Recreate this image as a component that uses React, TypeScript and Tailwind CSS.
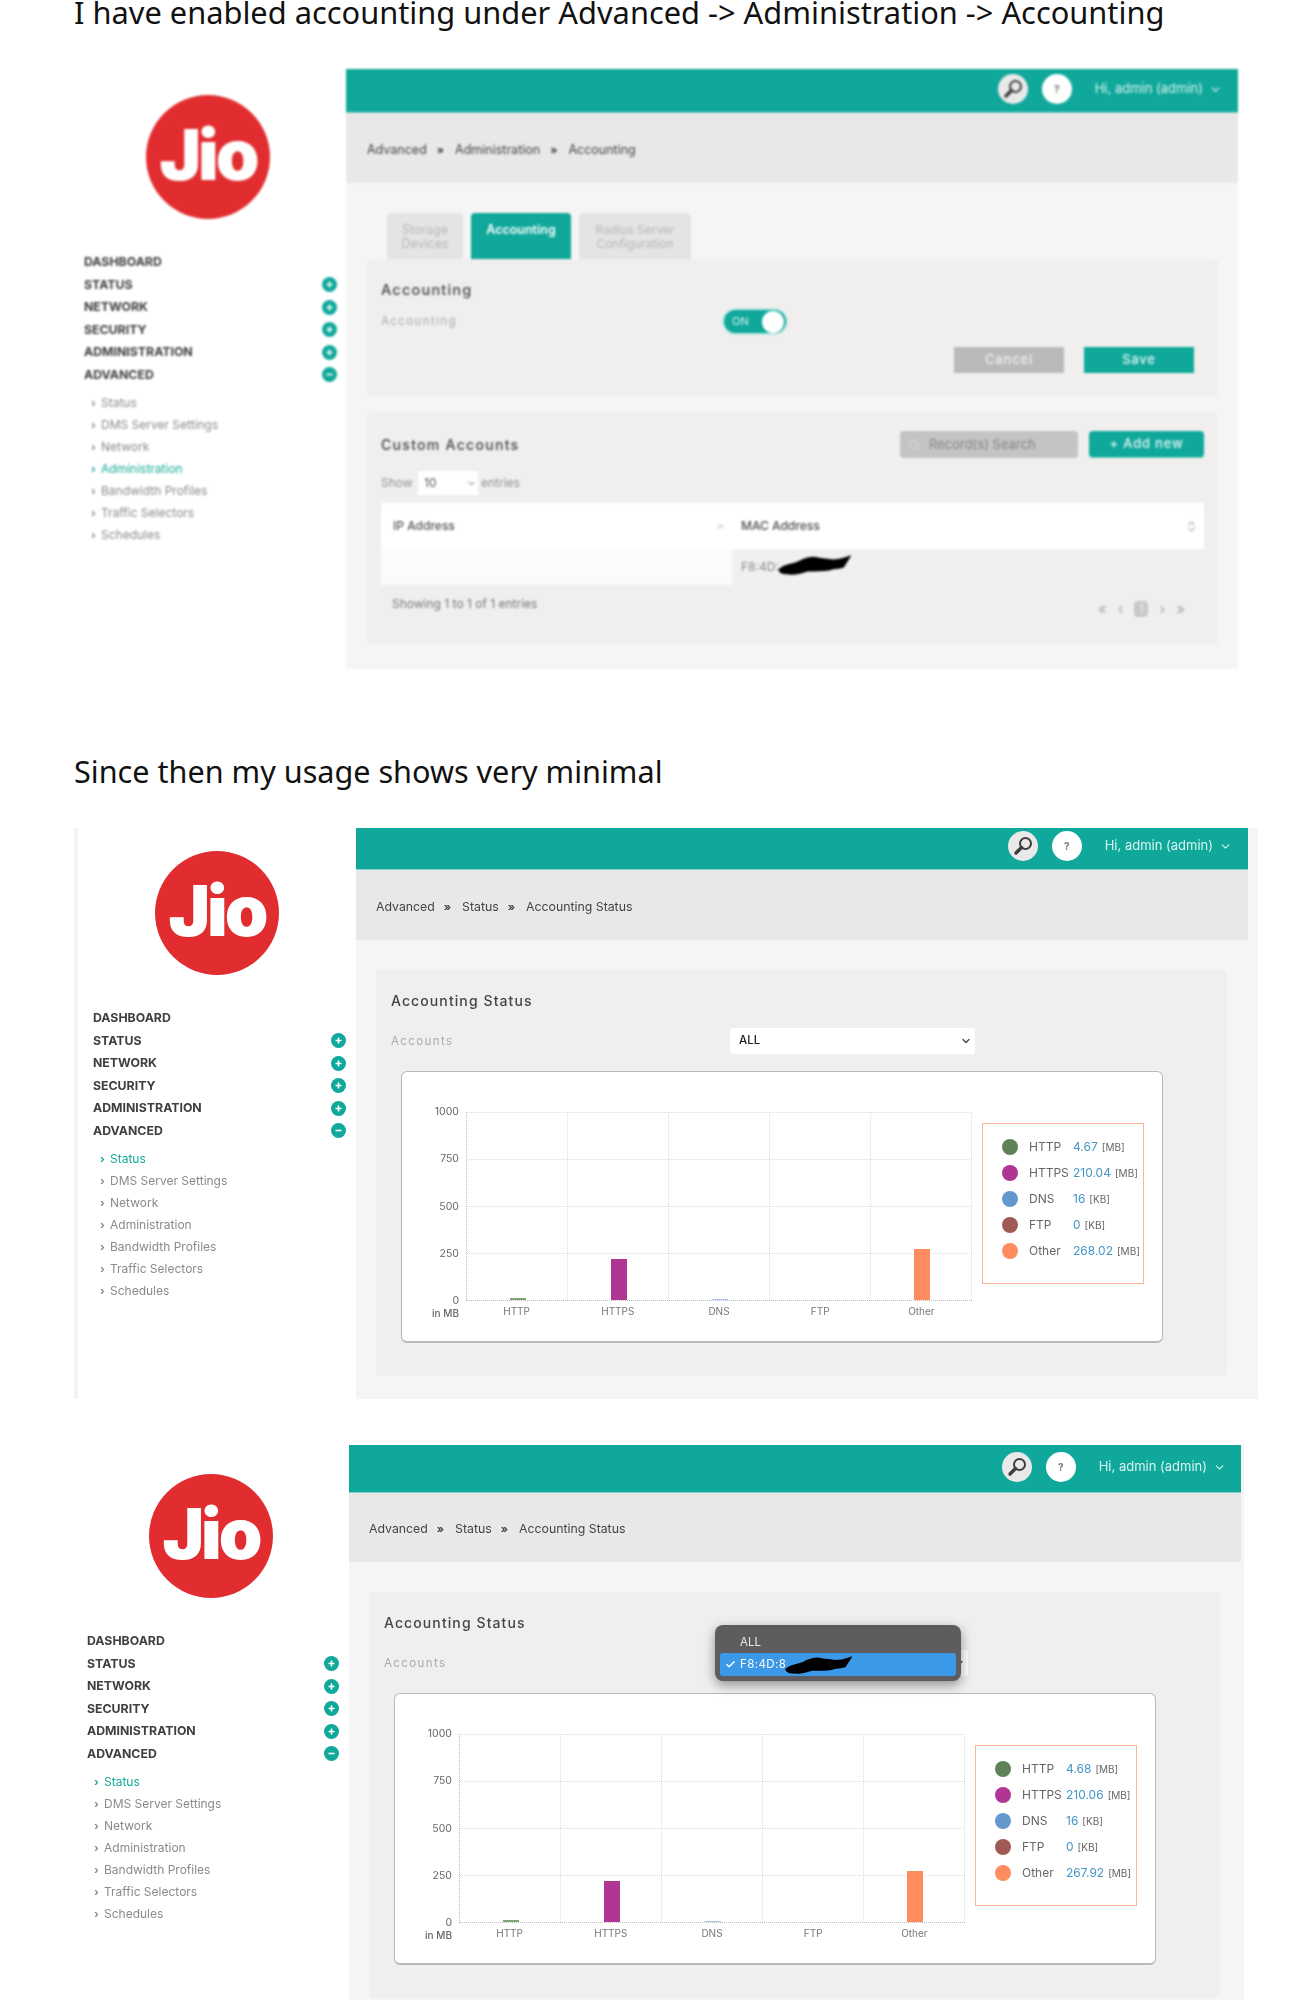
import { ChevronDown, ChevronUp, ChevronsUpDown, Search, Check } from "lucide-react";

const navItems = ["DASHBOARD", "STATUS", "NETWORK", "SECURITY", "ADMINISTRATION", "ADVANCED"];
const subItems = ["Status", "DMS Server Settings", "Network", "Administration", "Bandwidth Profiles", "Traffic Selectors", "Schedules"];

const bars = [
  { label: "HTTP", barClass: "h-[2px] bg-[#7fa277]" },
  { label: "HTTPS", barClass: "h-[41px] bg-[#b03693]" },
  { label: "DNS", barClass: "h-[1px] bg-[#a9c4ea]" },
  { label: "FTP", barClass: "h-0" },
  { label: "Other", barClass: "h-[51px] bg-[#ff8c5e]" },
];

const dotColors = ["bg-[#5f8258]", "bg-[#b03693]", "bg-[#6597cf]", "bg-[#a05a55]", "bg-[#ff8c5e]"];

type LegendRow = { name: string; value: string; unit: string };

function RoundIcon({ minus }: { minus?: boolean }) {
  return (
    <svg width="15" height="15" viewBox="0 0 15 15">
      <circle cx="7.5" cy="7.5" r="7.5" fill="#10a89b" />
      <path d={minus ? "M4.5 7.5h6" : "M4.5 7.5h6M7.5 4.5v6"} stroke="#fff" strokeWidth="1.6" />
    </svg>
  );
}

// coretan hitam yang menutupi MAC address
function Scribble({ className }: { className: string }) {
  return (
    <svg className={className} viewBox="0 0 74 20" preserveAspectRatio="none">
      <path
        d="M3 15c6-6 14-4 20-8 6-3 12-5 18-3 5 1 10 1 14 2 5 0 11-1 16-3l-5 8c-5 2-9 1-14 3-8 1-15 1-22 1-6 2-12 4-17 3-5 0-9 0-10-3z"
        fill="#000"
        stroke="#000"
        strokeWidth="3"
      />
    </svg>
  );
}

function Logo() {
  return (
    <div className="ml-[62px] flex h-[124px] w-[124px] items-center justify-center rounded-full bg-[#e22d30] pb-[5px]">
      <span className="font-[Inter,sans-serif] text-[70px] leading-none font-black tracking-[-3px] text-white">Jio</span>
    </div>
  );
}

function Sidebar({ className, activeSub }: { className: string; activeSub: number }) {
  return (
    <aside className={className}>
      <Logo />
      <div className="mt-8">
        {navItems.map((item, i) => (
          <div key={item} className="flex h-[22.5px] items-center justify-between text-[12.3px] font-bold text-[#3f3f3f]">
            <span>{item}</span>
            {i > 0 && <RoundIcon minus={item === "ADVANCED"} />}
          </div>
        ))}
      </div>
      <div className="mt-[6px] pl-[7px]">
        {subItems.map((item, i) => (
          <div key={item} className={`flex h-[22px] items-center text-[12px] ${i === activeSub ? "text-[#18a99b]" : "text-[#8a8a8a]"}`}>
            <span className="w-[10px] text-[11px] font-bold">›</span>
            {item}
          </div>
        ))}
      </div>
    </aside>
  );
}

function SearchGlyph() {
  return (
    <svg width="22" height="22" viewBox="0 0 22 22" fill="none">
      <circle cx="13.5" cy="8.5" r="5.5" stroke="#3d3d3d" strokeWidth="2" />
      <path d="M9.5 12.5L4 18" stroke="#3d3d3d" strokeWidth="3.4" strokeLinecap="round" />
    </svg>
  );
}

function Header({ className }: { className: string }) {
  return (
    <div className={className}>
      <div className="flex h-[30px] w-[30px] items-center justify-center rounded-full bg-[#e9e9e9]">
        <SearchGlyph />
      </div>
      <div className="ml-[14px] flex h-[30px] w-[30px] items-center justify-center rounded-full bg-white text-[10px] font-bold text-[#777]">?</div>
      <span className="ml-[23px] text-[13px] text-[#d9f3f0]">Hi, admin (admin)</span>
      <ChevronDown size={13} className="ml-[6px] text-[#d9f3f0]" />
    </div>
  );
}

function Breadcrumb({ items, className }: { items: string[]; className: string }) {
  return (
    <div className={className}>
      {items.map((item, i) => (
        <span key={item} className="flex items-center gap-[11px]">
          {i > 0 && <span className="text-[11px] font-bold">»</span>}
          {item}
        </span>
      ))}
    </div>
  );
}

function Chart({ legend }: { legend: LegendRow[] }) {
  return (
    <div className="ml-[10px] mt-[17px] flex h-[272px] w-[762px] rounded-md border border-b-2 border-[#b9b9b9] bg-white pt-[40px]">
      <div className="grid grid-cols-[64px_506px] grid-rows-[189px_auto]">
        <div className="flex flex-col justify-between pr-[7px] text-[10.5px] text-[#666]">
          {["1000", "750", "500", "250", "0"].map((tick) => (
            <div key={tick} className="flex h-0 items-center justify-end">{tick}</div>
          ))}
        </div>
        <div className="grid border-b border-l border-dotted border-[#bbb]">
          <div className="col-start-1 row-start-1 grid grid-cols-5 grid-rows-4">
            {Array.from({ length: 20 }).map((_, i) => (
              <div key={i} className="border-t border-r border-dotted border-[#dcdcdc]" />
            ))}
          </div>
          <div className="col-start-1 row-start-1 grid grid-cols-5 items-end justify-items-center">
            {bars.map((bar) => (
              <div key={bar.label} className={`w-[16px] ${bar.barClass}`} />
            ))}
          </div>
        </div>
        <div className="mt-[5px] pr-[7px] text-right text-[10px] font-medium text-[#666]">in MB</div>
        <div className="mt-[3px] grid grid-cols-5 justify-items-center text-[10px] text-[#777]">
          {bars.map((bar) => (
            <span key={bar.label}>{bar.label}</span>
          ))}
        </div>
      </div>
      <div className="ml-[10px] mt-[11px] h-[161px] w-[162px] border-[1.5px] border-[#ffb49a] pt-[10px] pl-[19px]">
        {legend.map((row, i) => (
          <div key={row.name} className="flex h-[26px] items-center text-[12px] text-[#666]">
            <span className={`h-[16px] w-[16px] rounded-full ${dotColors[i]}`} />
            <span className="ml-[11px] w-[44px]">{row.name}</span>
            <span className="text-[#4497c4]">{row.value}</span>
            <span className="ml-[4px] text-[10px]">{row.unit}</span>
          </div>
        ))}
      </div>
    </div>
  );
}

function AccountingStatus({ legend, open }: { legend: LegendRow[]; open?: boolean }) {
  return (
    <div className="ml-[20px] mt-[30px] h-[406px] w-[851px] rounded-sm bg-[#f0efee] pt-[21px] pl-[15px]">
      <div className="h-[20px] text-[14px] leading-[20px] font-medium tracking-[1.1px] text-[#444]">Accounting Status</div>
      <div className="mt-[17px] flex h-[26px] items-center">
        <span className="w-[339px] pt-[1px] text-[11.5px] tracking-[1.4px] text-[#aaa]">Accounts</span>
        <div className="relative flex h-[26px] w-[245px] items-center justify-between rounded-[3px] bg-white pr-[3px] pl-[9px] text-[11.5px] font-medium text-[#222]">
          <span>{open ? "" : "ALL"}</span>
          <ChevronDown size={12} strokeWidth={2.5} className="text-[#444]" />
          {open && (
            <div className="absolute top-[-25px] left-[-8px] h-[56px] w-[246px] rounded-lg bg-[#5f5c60] px-[5px] pt-[8px] text-[11.5px] font-normal text-white shadow-[0_4px_12px_rgba(0,0,0,0.4)]">
              <div className="h-[20px] pl-[20px] leading-[18px] text-[#e8e8e8]">ALL</div>
              <div className="relative flex h-[23px] items-center rounded-[3px] bg-[#3b99e8]">
                <Check size={11} strokeWidth={3} className="ml-[5px]" />
                <span className="ml-[4px] tracking-[0.4px]">F8:4D:8</span>
                <Scribble className="absolute top-[3px] left-[64px] h-[18px] w-[68px]" />
              </div>
            </div>
          )}
        </div>
      </div>
      <Chart legend={legend} />
    </div>
  );
}

function ShotOne() {
  return (
    <section className="ml-[74px] mt-[41px] flex blur-[0.8px]">
      <Sidebar className="w-[272px] pt-[26px] pr-[9px] pl-[10px]" activeSub={3} />
      <div className="h-[600px] w-[892px] bg-[#f5f5f5]">
        <Header className="flex h-[44px] items-center justify-end border-b border-[#7fd3ca] bg-[#10a89b] pr-[16px] pb-[3px]" />
        <Breadcrumb items={["Advanced", "Administration", "Accounting"]} className="flex h-[70px] items-center gap-[10px] bg-[#e8e8e8] pt-[4px] pl-[21px] text-[12.5px] text-[#444]" />
        <div className="ml-[41px] mt-[30px] flex h-[46px] gap-[8px] text-center text-[12.5px] leading-[14px]">
          <div className="w-[76px] rounded-t bg-[#e3e4e6] pt-[10px] text-[#b8b8b8]">Storage<br />Devices</div>
          <div className="w-[100px] rounded-t bg-[#10a89b] pt-[10px] font-semibold text-white">Accounting</div>
          <div className="w-[112px] rounded-t bg-[#e3e4e6] pt-[10px] text-[12px] text-[#b8b8b8]">Radius Server<br />Configuration</div>
        </div>
        <div className="ml-[21px] h-[137px] w-[851px] rounded-sm bg-[#f0efee] pt-[21px] pr-[24px] pl-[14px]">
          <div className="h-[20px] text-[14.5px] leading-[20px] font-medium tracking-[1.2px] text-[#444]">Accounting</div>
          <div className="mt-[8px] flex h-[27px] items-center">
            <span className="w-[341px] text-[11.5px] tracking-[1.4px] text-[#aaa]">Accounting</span>
            <div className="flex h-[27px] w-[66px] items-center justify-between rounded-full border-2 border-[#bfe9e4] bg-[#10a89b] pr-[2px] pl-[8px] text-[11px] text-[#d9f3f0]">
              ON
              <span className="h-[22px] w-[22px] rounded-full bg-white" />
            </div>
          </div>
          <div className="mt-[12px] flex justify-end gap-[20px] text-[13px] font-medium tracking-[0.8px]">
            <div className="flex h-[26px] w-[110px] items-center justify-center bg-[#b9babb] text-[#eee]">Cancel</div>
            <div className="flex h-[26px] w-[110px] items-center justify-center bg-[#10a89b] text-[#e6f6f4]">Save</div>
          </div>
        </div>
        <div className="ml-[21px] mt-[17px] h-[231px] w-[851px] rounded-sm bg-[#f0efee] px-[14px] pt-[18px]">
          <div className="flex h-[27px] items-center">
            <span className="flex-1 text-[14px] font-medium tracking-[1.3px] text-[#444]">Custom Accounts</span>
            <div className="flex h-[27px] w-[178px] items-center rounded-sm bg-[#c4c4c4] pl-[8px] text-[13px] text-[#858585]">
              <Search size={12} className="mr-[9px] text-[#ddd]" />
              Record(s) Search
            </div>
            <div className="ml-[11px] flex h-[27px] w-[115px] items-center justify-center rounded-sm border-b border-[#6fcfc4] bg-[#10a89b] text-[13px] font-medium tracking-[0.8px] text-[#e6f6f4]">+ Add new</div>
          </div>
          <div className="mt-[13px] flex h-[24px] items-center text-[12px] text-[#909090]">
            <span className="w-[37px]">Show</span>
            <div className="flex h-[24px] w-[60px] items-center justify-between bg-white pr-[1px] pl-[6px] text-[#555]">
              10
              <ChevronDown size={11} />
            </div>
            <span className="ml-[3px]">entries</span>
          </div>
          <div className="mt-[8px] grid w-[823px] grid-cols-[351px_472px] text-[12px] text-[#555]">
            <div className="flex h-[46px] items-center justify-between bg-white pr-[6px] pl-[12px] font-medium">
              IP Address
              <ChevronUp size={11} className="text-[#888]" />
            </div>
            <div className="flex h-[46px] items-center justify-between bg-white pr-[6px] pl-[9px] font-medium">
              MAC Address
              <ChevronsUpDown size={13} className="text-[#aaa]" />
            </div>
            <div className="h-[36px] bg-[#fbfbfb]" />
            <div className="relative flex h-[36px] items-center bg-[#f1f0ef] pl-[9px] text-[#888]">
              F8:4D:
              <Scribble className="absolute top-[6px] left-[45px] h-[20px] w-[74px]" />
            </div>
          </div>
          <div className="flex items-start justify-between pr-[19px] pl-[11px] text-[12px] text-[#777]">
            <span className="mt-[11px] leading-[16px]">Showing 1 to 1 of 1 entries</span>
            <div className="mt-[16px] flex items-center gap-[11px] text-[15px] leading-[16px] text-[#aaa]">
              <span>«</span>
              <span>‹</span>
              <span className="w-[14px] rounded-sm bg-[#c9c9c9] text-center text-[12px] text-[#eee]">1</span>
              <span>›</span>
              <span>»</span>
            </div>
          </div>
        </div>
      </div>
    </section>
  );
}

const legendTwo: LegendRow[] = [
  { name: "HTTP", value: "4.67", unit: "[MB]" },
  { name: "HTTPS", value: "210.04", unit: "[MB]" },
  { name: "DNS", value: "16", unit: "[KB]" },
  { name: "FTP", value: "0", unit: "[KB]" },
  { name: "Other", value: "268.02", unit: "[MB]" },
];

const legendThree: LegendRow[] = [
  { name: "HTTP", value: "4.68", unit: "[MB]" },
  { name: "HTTPS", value: "210.06", unit: "[MB]" },
  { name: "DNS", value: "16", unit: "[KB]" },
  { name: "FTP", value: "0", unit: "[KB]" },
  { name: "Other", value: "267.92", unit: "[MB]" },
];

export default function App() {
  return (
    <main className="h-[2014px] w-[1294px] overflow-hidden bg-white font-[Inter,sans-serif]">
      <h1 className="ml-[74px] -mt-[4px] h-[32px] font-['Noto_Sans',sans-serif] text-[30.8px] leading-[32px] font-normal text-[#111]">
        I have enabled accounting under Advanced -&gt; Administration -&gt; Accounting
      </h1>
      <ShotOne />
      <h2 className="ml-[74px] mt-[86px] h-[32px] font-['Noto_Sans',sans-serif] text-[30.6px] leading-[32px] font-normal text-[#111]">
        Since then my usage shows very minimal
      </h2>

      <section className="ml-[74px] mt-[41px] flex border-l-4 border-[#f3f3f3] blur-[0.5px]">
        <Sidebar className="w-[278px] pt-[23px] pr-[10px] pl-[15px]" activeSub={0} />
        <div className="h-[571px] w-[902px] bg-[#f5f5f5]">
          <Header className="flex h-[42px] w-[892px] items-center justify-end border-b border-[#7fd3ca] bg-[#10a89b] pr-[16px] pb-[5px]" />
          <Breadcrumb items={["Advanced", "Status", "Accounting Status"]} className="flex h-[70px] w-[892px] items-center gap-[9px] bg-[#e8e8e8] pt-[4px] pl-[20px] text-[12.3px] text-[#444]" />
          <AccountingStatus legend={legendTwo} />
        </div>
      </section>

      <section className="ml-[74px] mt-[46px] flex blur-[0.5px]">
        <Sidebar className="w-[275px] pt-[29px] pr-[10px] pl-[13px]" activeSub={0} />
        <div className="h-[555px] w-[895px] bg-[#f5f5f5]">
          <Header className="flex h-[48px] w-[892px] items-center justify-end border-b border-[#7fd3ca] bg-[#10a89b] pr-[15px] pb-[3px]" />
          <Breadcrumb items={["Advanced", "Status", "Accounting Status"]} className="flex h-[69px] w-[892px] items-center gap-[9px] bg-[#e8e8e8] pt-[4px] pl-[20px] text-[12.3px] text-[#444]" />
          <AccountingStatus legend={legendThree} open />
        </div>
      </section>
    </main>
  );
}
